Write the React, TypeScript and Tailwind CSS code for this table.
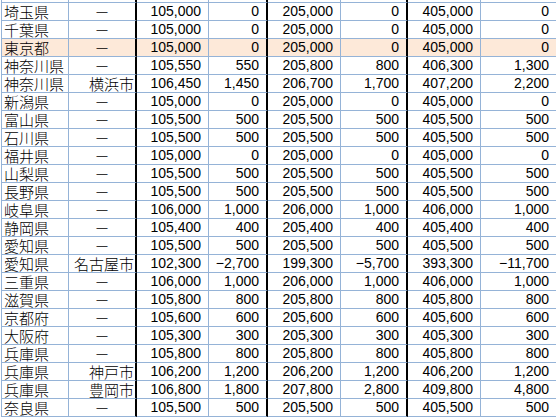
const rows: string[][] = [
  ["埼玉県", "", "105,000", "0", "205,000", "0", "405,000", "0"],
  ["千葉県", "", "105,000", "0", "205,000", "0", "405,000", "0"],
  ["東京都", "", "105,000", "0", "205,000", "0", "405,000", "0"],
  ["神奈川県", "", "105,550", "550", "205,800", "800", "406,300", "1,300"],
  ["神奈川県", "横浜市", "106,450", "1,450", "206,700", "1,700", "407,200", "2,200"],
  ["新潟県", "", "105,000", "0", "205,000", "0", "405,000", "0"],
  ["富山県", "", "105,500", "500", "205,500", "500", "405,500", "500"],
  ["石川県", "", "105,500", "500", "205,500", "500", "405,500", "500"],
  ["福井県", "", "105,000", "0", "205,000", "0", "405,000", "0"],
  ["山梨県", "", "105,500", "500", "205,500", "500", "405,500", "500"],
  ["長野県", "", "105,500", "500", "205,500", "500", "405,500", "500"],
  ["岐阜県", "", "106,000", "1,000", "206,000", "1,000", "406,000", "1,000"],
  ["静岡県", "", "105,400", "400", "205,400", "400", "405,400", "400"],
  ["愛知県", "", "105,500", "500", "205,500", "500", "405,500", "500"],
  ["愛知県", "名古屋市", "102,300", "−2,700", "199,300", "−5,700", "393,300", "−11,700"],
  ["三重県", "", "106,000", "1,000", "206,000", "1,000", "406,000", "1,000"],
  ["滋賀県", "", "105,800", "800", "205,800", "800", "405,800", "800"],
  ["京都府", "", "105,600", "600", "205,600", "600", "405,600", "600"],
  ["大阪府", "", "105,300", "300", "205,300", "300", "405,300", "300"],
  ["兵庫県", "", "105,800", "800", "205,800", "800", "405,800", "800"],
  ["兵庫県", "神戸市", "106,200", "1,200", "206,200", "1,200", "406,200", "1,200"],
  ["兵庫県", "豊岡市", "106,800", "1,800", "207,800", "2,800", "409,800", "4,800"],
  ["奈良県", "", "105,500", "500", "205,500", "500", "405,500", "500"],
];

const jp = "font-['Noto_Sans_CJK_JP',sans-serif] font-light text-[15px]";
const num = "font-['Liberation_Sans',Arial,sans-serif] text-[14px] justify-end pr-[7px]";
const blue = "border-r border-r-[#95b3d7]";
const black = "border-r-2 border-r-black";

// per-column cell classes (borders + alignment)
const colClass = [
  `${blue} ${jp} justify-start pl-[2px]`,
  `${black} ${jp}`,
  `${blue} ${num}`,
  `${black} ${num}`,
  `${blue} ${num}`,
  `${black} ${num}`,
  `${blue} ${num}`,
  `${num}`,
];

function Row({ cells, highlight, partial }: { cells: string[]; highlight?: boolean; partial?: boolean }) {
  return (
    <div
      className={`grid grid-cols-[67px_68px_72px_59px_73px_67px_73px_75px] h-[18px] ${
        highlight ? "bg-[#fde9d9]" : "bg-white"
      } ${partial ? "-mt-[15px]" : ""}`}
    >
      {cells.map((c, i) => {
        let content: string = c;
        let align = "";
        if (i === 1) {
          if (c === "") {
            content = "－";
            align = "justify-center";
          } else {
            align = "justify-end pr-[1px]";
          }
        }
        return (
          <div
            key={i}
            className={`flex items-center border-b border-b-[#95b3d7] leading-[15px] text-black whitespace-nowrap ${colClass[i]} ${align}`}
          >
            {partial ? null : content}
          </div>
        );
      })}
    </div>
  );
}

export default function App() {
  return (
    <div className="w-[556px] h-[417px] overflow-hidden bg-white">
      <div className="ml-[1px] border-l border-l-[#95b3d7] w-max">
        <Row cells={["", "", "", "", "", "", "", ""]} partial />
        {rows.map((r, i) => (
          <Row key={i} cells={r} highlight={r[0] === "東京都"} />
        ))}
      </div>
    </div>
  );
}
